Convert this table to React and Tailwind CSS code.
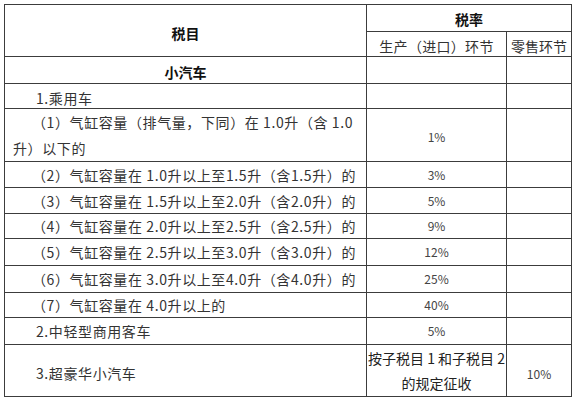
import React from "react";

const B = "border border-[#3c3c3c] p-0";

function Row({ h, label, rate }) {
  return (
    <tr className={h}>
      <td className={`${B} pl-[27px] text-left whitespace-nowrap tracking-[0.6px]`}>{label}</td>
      <td className={`${B} text-center text-[12px] text-[#444]`}>{rate}</td>
      <td className={B}></td>
    </tr>
  );
}

export default function App() {
  return (
    <div className="w-[576px] h-[400px] bg-white pt-[4px] pl-[4px] font-['Noto_Sans_CJK_SC','Noto_Sans',sans-serif]">
      <table className="w-[567px] border-collapse table-fixed text-[14px] leading-[18px] text-[#333]">
        <colgroup>
          <col className="w-[362px]" />
          <col className="w-[140px]" />
          <col className="w-[65px]" />
        </colgroup>
        <tbody>
          <tr className="h-[27px]">
            <td rowSpan={2} className={`${B} text-center font-bold text-[#111] pt-[5px]`}>税目</td>
            <td colSpan={2} className={`${B} text-center font-bold text-[#111] pt-[2px]`}>税率</td>
          </tr>
          <tr className="h-[25px]">
            <td className={`${B} text-center whitespace-nowrap pt-[3px] tracking-[0.3px]`}>生产（进口）环节</td>
            <td className={`${B} text-center whitespace-nowrap pt-[3px]`}>零售环节</td>
          </tr>
          <tr className="h-[27px]">
            <td className={`${B} text-center font-bold text-[#111] pt-[3px]`}>小汽车</td>
            <td className={B}></td>
            <td className={B}></td>
          </tr>
          <tr className="h-[25px]">
            <td className={`${B} pl-[31px] pt-[3px] tracking-[0.6px]`}>1.乘用车</td>
            <td className={B}></td>
            <td className={B}></td>
          </tr>
          <tr className="h-[52px]">
            <td className={`${B} pl-[8px] text-left whitespace-nowrap leading-[26px] tracking-[0.6px]`}>
              <span className="inline-block pl-[19px]">（1）气缸容量（排气量，下同）在 1.0升（含 1.0</span>
              <br />
              升）以下的
            </td>
            <td className={`${B} text-center text-[12px] text-[#444] pt-[4px]`}>1%</td>
            <td className={B}></td>
          </tr>
          <Row h="h-[26px]" label="（2）气缸容量在 1.0升以上至1.5升（含1.5升）的" rate="3%" />
          <Row h="h-[26px]" label="（3）气缸容量在 1.5升以上至2.0升（含2.0升）的" rate="5%" />
          <Row h="h-[25px]" label="（4）气缸容量在 2.0升以上至2.5升（含2.5升）的" rate="9%" />
          <Row h="h-[27px]" label="（5）气缸容量在 2.5升以上至3.0升（含3.0升）的" rate="12%" />
          <Row h="h-[27px]" label="（6）气缸容量在 3.0升以上至4.0升（含4.0升）的" rate="25%" />
          <Row h="h-[25px]" label="（7）气缸容量在 4.0升以上的" rate="40%" />
          <tr className="h-[27px]">
            <td className={`${B} pl-[31px] tracking-[0.6px]`}>2.中轻型商用客车</td>
            <td className={`${B} text-center text-[12px] text-[#444]`}>5%</td>
            <td className={B}></td>
          </tr>
          <tr className="h-[52px]">
            <td className={`${B} pl-[31px] pt-[4px] tracking-[0.6px]`}>3.超豪华小汽车</td>
            <td className={`${B} text-center whitespace-nowrap leading-[25px] text-[#222]`}>
              按子税目 1 和子税目 2
              <br />
              的规定征收
            </td>
            <td className={`${B} text-center text-[12px] text-[#444] pt-[6px]`}>10%</td>
          </tr>
        </tbody>
      </table>
    </div>
  );
}
